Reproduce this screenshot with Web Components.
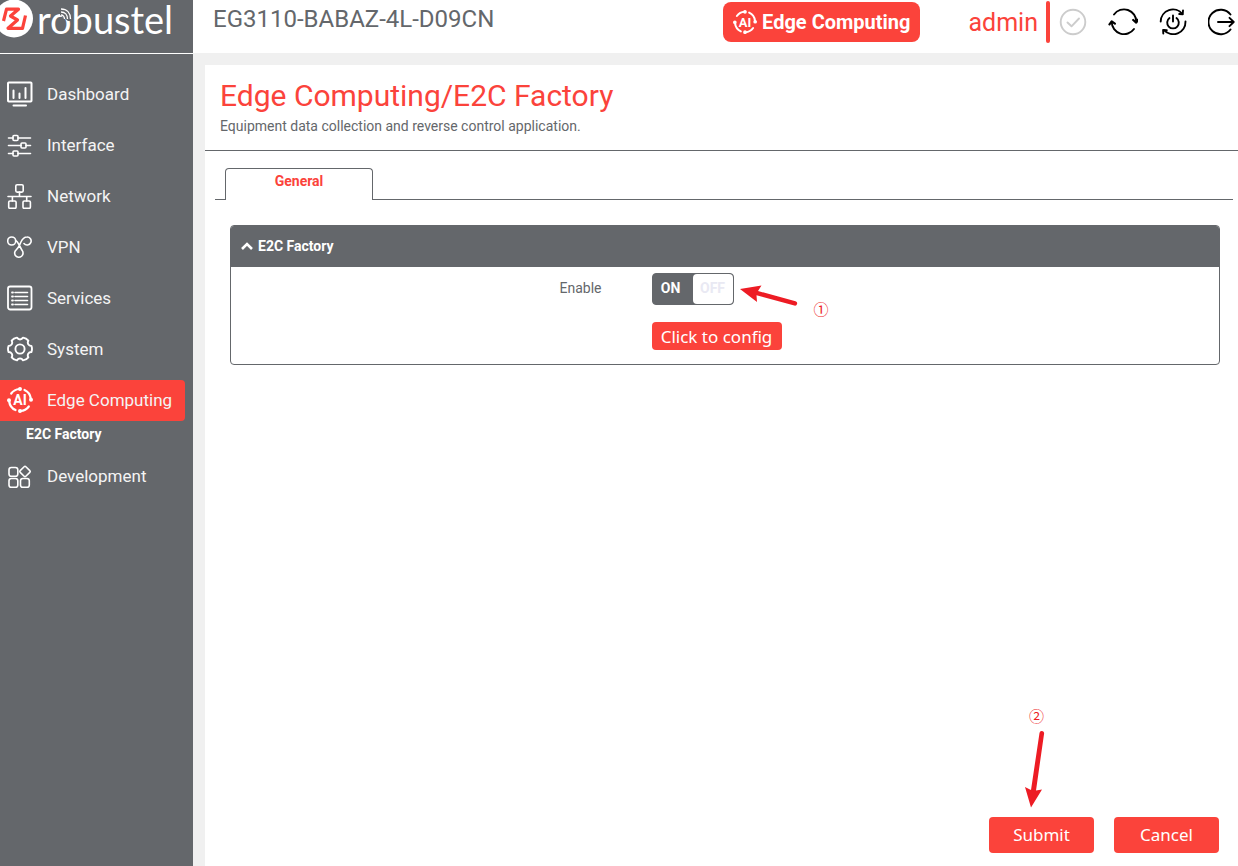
<!DOCTYPE html>
<html lang="en">
<head>
<meta charset="utf-8">
<meta name="viewport" content="width=device-width, initial-scale=1">
<title>Edge Computing/E2C Factory</title>
<style>
  :root {
    --red: #fb433b;
    --slate: #64676b;
    --mist: #f0f0f0;
    --ink: #ed1c24;
  }
  body { margin: 0; font-family: Roboto, "Liberation Sans", sans-serif; font-size: 14px; color: var(--slate); background: #fff; }
</style>
</head>
<body>
<rb-app>
  <rb-sidebar slot="side">
    <rb-nav-item icon="dashboard">Dashboard</rb-nav-item>
    <rb-nav-item icon="interface">Interface</rb-nav-item>
    <rb-nav-item icon="network">Network</rb-nav-item>
    <rb-nav-item icon="vpn">VPN</rb-nav-item>
    <rb-nav-item icon="services">Services</rb-nav-item>
    <rb-nav-item icon="system">System</rb-nav-item>
    <rb-nav-item icon="ai" active child="E2C Factory">Edge Computing</rb-nav-item>
    <rb-nav-item icon="development">Development</rb-nav-item>
  </rb-sidebar>
  <rb-topbar slot="top" device="EG3110-BABAZ-4L-D09CN" user="admin"></rb-topbar>
  <rb-page heading="Edge Computing/E2C Factory" summary="Equipment data collection and reverse control application.">
    <rb-tabs label="General">
      <rb-panel heading="E2C Factory">
        <rb-switch-row></rb-switch-row>
      </rb-panel>
    </rb-tabs>
    <rb-actions slot="footer"></rb-actions>
  </rb-page>
</rb-app>

<script>
const gearPath = () => {
  const pt = (deg, r) => {
    const a = deg * Math.PI / 180;
    return (13 + r * Math.cos(a)).toFixed(2) + ' ' + (13 + r * Math.sin(a)).toFixed(2);
  };
  let d = '';
  for (let t = 0; t < 360; t += 60) {
    d += (t ? 'L' : 'M') + pt(t - 15, 11.8) + 'Q' + pt(t, 12.6) + ' ' + pt(t + 15, 11.8);
    d += 'C' + pt(t + 20, 9) + ' ' + pt(t + 40, 9) + ' ' + pt(t + 45, 11.8);
  }
  return d + 'Z';
};

const ICONS = {
  dashboard: '<rect x="1" y="1.5" width="23.5" height="19" rx=".8" stroke-width="2"/><path d="M6.5 9.5v7.500M12.5 12.5v4.500M18.5 7v10M6.5 24.500h12.500" stroke-width="2"/>',
  interface: '<path d="M1.5 6H6M11 6h12.500M1.5 13.500H14M19 13.500h4.500M1.5 21.500H6M11 21.500h12.500" stroke-width="1.600"/><rect x="6" y="3.500" width="5" height="5" rx="1"/><rect x="14" y="11" width="5" height="5" rx="1"/><rect x="6" y="19" width="5" height="5" rx="1"/>',
  network: '<rect x="8.800" y="1.700" width="7.400" height="7.400" rx="1.300"/><rect x="1.700" y="18" width="7.400" height="7.400" rx="1.300"/><rect x="16" y="18" width="7.400" height="7.400" rx="1.300"/><path d="M1 13.500h23M12.500 9v4.500M5.400 13.500V18M19.700 13.500V18"/>',
  vpn: '<circle cx="4.700" cy="7" r="4"/><path d="M8.700 6.500c1.800.6 2.800 3.300 4 5.500l2.300 4.300a4.200 4.200 0 1 1-5.800-.5c2.400-1.700 3.300-4.800 4.500-7.300 1.200-2.600 2.600-5.500 6.300-5.500a4 4 0 1 1-3 6.500"/>',
  services: '<rect x="1" y="1.500" width="23.500" height="23" rx="2.200" stroke-width="1.800"/><path d="M8 7.500h12.500M8 11.500h12.500M8 15.500h12.500M8 19.500h12.500"/><path d="M5 7.500h1M5 11.500h1M5 15.500h1M5 19.500h1" stroke-width="1.800"/>',
  system: '<path d="' + gearPath() + '" stroke-width="1.900"/><circle cx="13" cy="13" r="4.600" stroke-width="1.900"/>',
  ai: '<path d="M4.200 6.500A11 11 0 0 1 12.500 2M17.500 2.900A11 11 0 0 1 23.800 11.500M21.800 19.500A11 11 0 0 1 13.500 24M8.500 23.100A11 11 0 0 1 2.200 14.500" stroke-width="2.200"/><circle cx="13" cy="2" r="1.200" fill="currentColor"/><circle cx="24" cy="12.700" r="1.200" fill="currentColor"/><circle cx="13" cy="24" r="1.200" fill="currentColor"/><circle cx="2" cy="13.300" r="1.200" fill="currentColor"/><text x="13" y="18" text-anchor="middle" font-family="Roboto, sans-serif" font-weight="700" font-size="14" fill="currentColor" stroke="none">AI</text>',
  development: '<rect x="2" y="4.500" width="8.800" height="8.800" rx="2.300"/><rect x="2" y="15.500" width="8.800" height="8.800" rx="2.300"/><rect x="13.500" y="15.500" width="8.800" height="8.800" rx="2.300"/><rect x="14" y="4.500" width="8" height="8" rx="1.200" transform="rotate(45 18 8.500)"/>'
};
const svg = (body, size = 26, box = size, w = 1.6) =>
  `<svg width="${size}" height="${size}" viewBox="0 0 ${box} ${box}" fill="none" stroke="currentColor" stroke-width="${w}" stroke-linecap="round" stroke-linejoin="round" aria-hidden="true">${body}</svg>`;

class Base extends HTMLElement {
  connectedCallback() {
    if (this.shadowRoot) return;
    this.attachShadow({ mode: 'open' }).innerHTML =
      `<style>*{box-sizing:border-box}svg{display:block;flex:none}button{font:inherit;border:0;margin:0;cursor:pointer}a{color:inherit;text-decoration:none}${this.css()}</style>${this.html()}`;
  }
  attr(n) { return this.getAttribute(n) || ''; }
}

customElements.define('rb-app', class extends Base {
  css() { return `
    :host { display: grid; grid-template-columns: 193px minmax(0, 1fr); min-height: 100vh; }
    .main { display: flex; flex-direction: column; background: var(--mist); }
    ::slotted(rb-page) { flex: 1; }`; }
  html() { return `<slot name="side"></slot><div class="main"><slot name="top"></slot><slot></slot></div>`; }
});

customElements.define('rb-logo', class extends Base {
  css() { return `
    :host { display: flex; height: 53px; color: #fff; }
    a { position: relative; display: flex; align-items: flex-start; gap: 3px; }
    span { font: 400 38px/38px Lato, sans-serif; }
    .waves { position: absolute; left: 59px; top: 7px; }`; }
  html() { return `<a href="#" aria-label="robustel">
    <svg width="34" height="40" viewBox="0 0 34 40" fill="none" aria-hidden="true">
      <circle cx="14" cy="18.500" r="19" fill="#fff"/>
      <path d="M3.500 21 6.500 9.200H18.500L10.500 16 17.500 20 8 28.300H22.500L25.500 15.500" stroke="#fb433b" stroke-width="3.200" stroke-linejoin="round"/>
    </svg><span>robustel</span>
    <svg class="waves" width="14" height="16" viewBox="0 0 14 16" fill="none" aria-hidden="true"><path d="M1 1h12v13H9L1 8Z" fill="#64676b"/><path d="M2 2c6 0 9.500 4 9.500 10M2 5c4 0 6.500 3 6.500 7M2 8c2 0 3.500 2 3.500 4" stroke="currentColor" stroke-width="1.300"/></svg>
  </a>`; }
});

customElements.define('rb-sidebar', class extends Base {
  css() { return `
    :host { display: block; background: var(--slate); color: #f4f4f4; }
    nav { display: flex; flex-direction: column; gap: 10px; padding: 20px 8px 20px 0; border-top: 1px solid #fff; }`; }
  html() { return `<rb-logo></rb-logo><nav aria-label="Main"><slot></slot></nav>`; }
});

customElements.define('rb-nav-item', class extends Base {
  css() { return `
    :host { display: block; }
    .item { display: flex; align-items: center; gap: 14px; height: 41px; padding: 0 0 2px 7px; font-size: 17px; border-radius: 0 4px 4px 0; }
    svg { color: #fff; }
    :host([active]) .item { background: var(--red); }
    .child { display: block; height: 25px; padding-left: 26px; font-weight: 700; font-size: 14px; line-height: 27px; color: #fff; }`; }
  html() {
    const child = this.attr('child');
    return `<a class="item" href="#">${svg(ICONS[this.attr('icon')])}<slot></slot></a>` +
      (child ? `<a class="child" href="#">${child}</a>` : '');
  }
});

customElements.define('rb-topbar', class extends Base {
  css() { return `
    :host { display: flex; align-items: center; height: 53px; padding: 2px 0 11px 20px; box-sizing: border-box; background: #fff; }
    .device { flex: 1; align-self: flex-start; font-size: 24px; line-height: 34px; white-space: nowrap; }
    .edge { display: flex; align-items: center; gap: 5px; height: 40px; padding: 0 10px; border-radius: 8px; background: var(--red); color: #fff; font-size: 20px; font-weight: 700; white-space: nowrap; }
    .user { margin-left: 48px; padding-right: 8px; font-size: 25px; color: var(--red); }
    .bar { width: 4px; height: 42px; border-radius: 2px; background: var(--red); margin-right: 8px; }
    .tools { display: flex; gap: 20px; color: #000; }
    .tools button { padding: 0; background: none; color: inherit; }
    .tools button.ok { color: #ccc; }`; }
  html() {
    const tool = (cls, label, body) => `<button class="${cls}" type="button" aria-label="${label}">${svg(body, 30, 30, 1.9)}</button>`;
    return `<div class="device">${this.attr('device')}</div>
      <button class="edge" type="button">${svg(ICONS.ai, 24, 26)}<span>Edge Computing</span></button>
      <div class="user">${this.attr('user')}</div><div class="bar"></div>
      <div class="tools">
        ${tool('ok', 'Status', '<circle cx="15" cy="15" r="12.300"/><path d="m9.500 15.500 4 3.800 7.500-7.800"/>')}
        ${tool('', 'Refresh', '<path d="M6 7.500A12.300 12.300 0 0 1 28.300 15M26 22A12.300 12.300 0 0 1 3.700 15"/><path d="m25.200 13 3 2.600 1.800-3M1.500 17.400l2.200-3 3.200 2.200" stroke-width="2.200"/>')}
        ${tool('', 'Reboot', '<path d="M2.700 14.500A12.300 12.300 0 0 1 24.500 7M27.500 14.500A12.300 12.300 0 0 1 6 23"/><path d="m25 3.500-.3 3.700-3.500-.2M5.300 26.500l-.2-3.500 3.700.2"/><path d="M11.500 11a5.800 5.800 0 1 0 7 0M15 8.500v6"/>')}
        ${tool('', 'Log out', '<path d="M22.500 7.500A12.300 12.300 0 1 0 22.500 22.500M10 15h15.500M21.500 10.800l4.200 4.200-4.200 4.200"/>')}
      </div>`;
  }
});

customElements.define('rb-page', class extends Base {
  css() { return `
    :host { display: flex; flex-direction: column; margin: 12px 0 0 12px; background: #fff; }
    header { height: 86px; padding: 12px 15px 0; border-bottom: 1px solid var(--slate); }
    h1 { margin: 0; font-size: 30px; font-weight: 400; line-height: 38px; color: var(--red); }
    p { margin: 0; line-height: 22px; }
    .fill { flex: 1; }`; }
  html() { return `<header><h1>${this.attr('heading')}</h1><p>${this.attr('summary')}</p></header><slot></slot><div class="fill"></div><slot name="footer"></slot>`; }
});

customElements.define('rb-tabs', class extends Base {
  css() { return `
    :host { display: block; padding: 17px 5px 0 10px; }
    .bar { display: flex; padding-left: 10px; border-bottom: 1px solid var(--slate); }
    button { width: 148px; height: 32px; margin-bottom: -1px; padding: 0 0 8px; border: 1px solid var(--slate); border-bottom: 0; border-radius: 4px 4px 0 0; background: #fff; color: var(--red); font-weight: 700; }
    .body { padding: 25px 13px 0 15px; }`; }
  html() { return `<div class="bar" role="tablist"><button type="button" role="tab" aria-selected="true">${this.attr('label')}</button></div><div class="body" role="tabpanel"><slot></slot></div>`; }
});

customElements.define('rb-panel', class extends Base {
  css() { return `
    :host { display: block; border: 1px solid var(--slate); border-radius: 4px; overflow: hidden; }
    h2 { display: flex; align-items: center; gap: 5px; height: 41px; margin: 0; padding: 0 0 2px 10px; background: var(--slate); color: #fff; font-size: 14px; }`; }
  html() { return `<h2><svg width="12" height="8" viewBox="0 0 12 8" fill="none" stroke="currentColor" stroke-width="2.600" aria-hidden="true"><path d="M1 7l5-5 5 5"/></svg>${this.attr('heading')}</h2><slot></slot>`; }
});

customElements.define('rb-callout', class extends Base {
  css() { return `
    :host { position: absolute; color: var(--ink); }
    span { position: absolute; font: 15px/20px "Noto Sans CJK SC", sans-serif; }
    :host([side="right"]) { left: 88px; top: 10px; }
    :host([side="right"]) span { left: 74px; top: 16px; }
    :host([side="above"]) { left: 34px; bottom: 45px; }
    :host([side="above"]) span { left: 6px; top: -22px; }`; }
  html() {
    const right = this.attr('side') === 'right';
    return right
      ? `<svg width="60" height="24" viewBox="0 0 60 24" aria-hidden="true"><path d="M0 6 21.500 2.500 18 8 55.500 18.200a2.200 2.200 0 0 1-1.200 4.300L16.500 12.300 17 19Z" fill="currentColor"/></svg><span>①</span>`
      : `<svg width="24" height="80" viewBox="0 0 24 80" aria-hidden="true"><path d="M8 79.500 2 59 8 62 16.500 5a2.300 2.300 0 0 1 4.600.5L13 62.500 19 61.500Z" fill="currentColor"/></svg><span>②</span>`;
  }
});

customElements.define('rb-switch-row', class extends Base {
  css() { return `
    :host { display: grid; grid-template-columns: 3fr 5fr; row-gap: 17px; padding: 6px 0 14px; }
    .name { text-align: right; line-height: 30px; }
    .cell { padding-left: 50px; display: flex; }
    .config { grid-column: 2; }
    .wrap { position: relative; }
    .switch { position: relative; display: flex; width: 82px; height: 32px; border: 1px solid var(--slate); border-radius: 4px; background: var(--slate); font-weight: 700; line-height: 28px; text-align: center; cursor: pointer; }
    .switch input { position: absolute; inset: 0; width: 100%; height: 100%; margin: 0; opacity: 0; cursor: pointer; }
    .on { width: 36px; color: #fff; }
    .off { width: 40px; margin-left: auto; border-radius: 4px; background: #fff; color: #e9e9f3; }
    .config button { min-width: 130px; height: 28px; padding: 0; border-radius: 4px; background: var(--red); color: #fff; font: 17px/30px "Noto Sans", sans-serif; }`; }
  html() { return `
    <label class="name" for="enable">Enable</label>
    <div class="cell"><div class="wrap">
      <div class="switch"><span class="on">ON</span><span class="off">OFF</span><input id="enable" type="checkbox" role="switch" checked></div>
      <rb-callout side="right"></rb-callout>
    </div></div>
    <div class="cell config"><button type="button">Click to config</button></div>`; }
});

customElements.define('rb-actions', class extends Base {
  css() { return `
    :host { display: flex; justify-content: flex-end; gap: 20px; padding: 0 19px 13px; }
    .wrap { position: relative; }
    button { display: block; width: 105px; height: 36px; padding: 0; border-radius: 4px; background: var(--red); color: #fff; font: 17px/36px "Noto Sans", sans-serif; }`; }
  html() { return `<div class="wrap"><button type="submit">Submit</button><rb-callout side="above"></rb-callout></div><button type="button">Cancel</button>`; }
});
</script>
</body>
</html>
